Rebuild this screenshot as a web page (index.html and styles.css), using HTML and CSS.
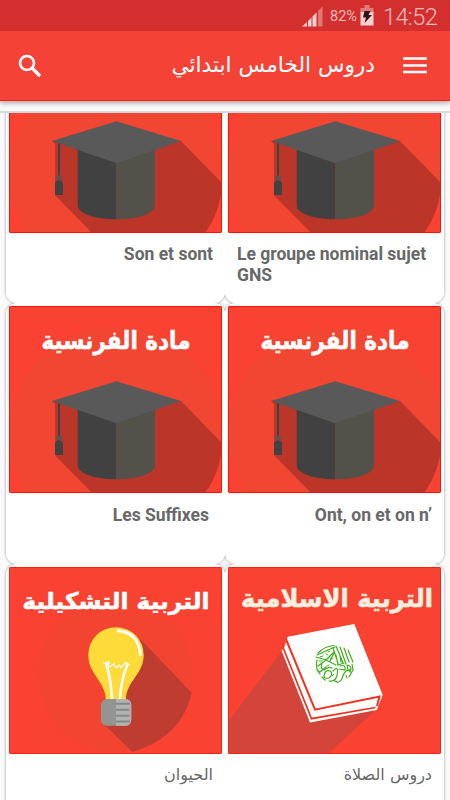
FILE: index.html
```html
<!DOCTYPE html>
<html lang="ar">
<head>
    <meta charset="UTF-8">
    <meta name="viewport" content="width=device-width, initial-scale=1.0">
    <title>دروس الخامس ابتدائي</title>
    <link rel="stylesheet" href="styles.css">
</head>
<body>

<!-- shared cap drawing -->
<svg class="defs" width="0" height="0">
    <symbol id="cap" viewBox="0 0 213 187">
        <rect width="213" height="187" fill="#f94232"/>
        <circle cx="107" cy="128" r="107" fill="#f14632"/>
        <path d="M43 95L172 95L212.7 136.7Q213 163 196 187H83.300L46 149.300V98Z" fill="#bb3529"/>
        <path d="M68.700 96H107.300V173.300C87 173.300 68.700 168 68.700 159Z" fill="#414141"/>
        <path d="M107.300 96H146V159C146 168 128 173.300 107.300 173.300Z" fill="#52514a"/>
        <path d="M43 95L107.300 75.300L172 95L107.300 117.300Z" fill="#595959"/>
        <path d="M50 97.500V130" stroke="#34484a" stroke-width="2"/>
        <circle cx="50" cy="132" r="2.800" fill="#555"/>
        <path d="M48 134.500H52L54 137V149H46V137Z" fill="#414343"/>
        <rect x=".5" y=".5" width="212" height="186" fill="none" stroke="#fb1208"/>
    </symbol>
</svg>

<header>
    <div class="statusbar">
        <svg width="21" height="21" viewBox="0 0 21 21">
            <path d="M0 20.500L5 16V20.500ZM6 15L9.500 11.500V20.500H6ZM10.500 10.500L14.500 6.500V20.500H10.500Z" fill="#f6d0d0"/>
            <path d="M16 5L20.500 .5V20.500H16Z" fill="#e07676"/>
        </svg>
        <span class="percent">82%</span>
        <svg class="battery" width="14" height="21" viewBox="0 0 14 21">
            <path d="M4.500 0H9.500V3H13.500V8H.5V3H4.500Z" fill="#e27c7c"/>
            <path d="M.5 7H13.500V20.500H.5Z" fill="#f6d0d0"/>
            <path d="M4.500 6H10.500L8.500 10H12L4.500 18L6 12.500H3Z" fill="#2c1414"/>
        </svg>
        <span class="clock">14:52</span>
    </div>
    <div class="toolbar">
        <svg class="search" width="24" height="24" viewBox="0 0 24 24">
            <circle cx="9" cy="9" r="7" fill="none" stroke="#fff" stroke-width="2.600"/>
            <path d="M14 14L22 22" stroke="#fff" stroke-width="3.300"/>
        </svg>
        <h1 dir="rtl">دروس الخامس ابتدائي</h1>
        <svg class="menu" width="24" height="17" viewBox="0 0 24 17">
            <path d="M0 1.500H24M0 8.500H24M0 15H24" stroke="#fff" stroke-width="2.700"/>
        </svg>
    </div>
</header>

<main>
    <div class="grid">
        <div class="card">
            <svg class="picture" viewBox="0 0 213 187"><use href="#cap"/></svg>
            <p class="right">Son et sont</p>
        </div>
        <div class="card">
            <svg class="picture" viewBox="0 0 213 187"><use href="#cap"/></svg>
            <p>Le groupe nominal sujet GNS</p>
        </div>

        <div class="card">
            <svg class="picture" viewBox="0 0 213 187">
                <use href="#cap"/>
                <text class="subject" x="107" y="42.500" textLength="149" lengthAdjust="spacingAndGlyphs">مادة الفرنسية</text>
            </svg>
            <p class="right pad">Les Suffixes</p>
        </div>
        <div class="card">
            <svg class="picture" viewBox="0 0 213 187">
                <use href="#cap"/>
                <text class="subject" x="107" y="42.500" textLength="149" lengthAdjust="spacingAndGlyphs">مادة الفرنسية</text>
            </svg>
            <p class="right">Ont, on et on n’</p>
        </div>

        <div class="card">
            <svg class="picture" viewBox="0 0 213 187">
                <rect width="213" height="187" fill="#f94232"/>
                <circle cx="106.500" cy="108" r="77" fill="#f34432"/>
                <path d="M131 72L135.300 76.300L182.700 125.700Q173 170 123.300 185L96 158L107 100Z" fill="#be3c30"/>
                <path d="M107 60.200A27.600 27.600 0 0 1 134.700 88C134.700 107 117 115 117 132H96.700C96.700 115 79.300 107 79.300 88A27.600 27.600 0 0 1 107 60.200Z" fill="#ffdb3a"/>
                <path d="M108 63.800Q130 65 131.500 88.500" fill="none" stroke="#fff" stroke-width="3"/>
                <path d="M97 96Q102 112 103 132M119 96Q112 112 111 132" fill="none" stroke="#fff" stroke-width="2.600"/>
                <path d="M94.500 96L100 95L99 101L105 97L107 101L110 98L112 101L116 96L121 98M116 95L119 98" fill="none" stroke="#fff" stroke-width="1.300"/>
                <rect x="92" y="132" width="30.300" height="26.700" rx="6" fill="#929591"/>
                <path d="M107 132H116Q122.300 132 122.300 138V152.700Q122.300 158.700 116 158.700H107Z" fill="#b0b3b2"/>
                <path d="M107 136.700H121M107 142.700H120.500M107 148.700H120.500M107 154.500H121" stroke="#858987" stroke-width="2"/>
                <rect class="edge" x=".5" y=".5" width="212" height="186"/>
                <text class="subject long" x="107" y="41.500" textLength="187" lengthAdjust="spacingAndGlyphs">التربية التشكيلية</text>
            </svg>
            <p class="right arabic" dir="rtl">الحيوان</p>
        </div>
        <div class="card">
            <svg class="picture" viewBox="0 0 213 187">
                <rect width="213" height="187" fill="#f94232"/>
                <path d="M54 84L0 154.700V187H100L147 143.500Z" fill="#d3443a"/>
                <path d="M59.700 69.700L126.300 57L154.700 128L148.700 143L82 155.500L53.500 83.500L56 81Z" fill="#fff"/>
                <path d="M54.500 79L83.500 151.700L147.500 140.500" fill="none" stroke="#f3311f" stroke-width="1.700"/>
                <path d="M57.500 71L87 142.700L151.500 129.500L149 139" fill="none" stroke="#f3311f" stroke-width="2"/>
                <path d="M54 79L58 73" stroke="#f94232" stroke-width="2"/>
                <!-- calligraphy roundel -->
                <g fill="none" stroke="#43ae1c" stroke-width="1.200" stroke-linecap="round">
                    <path d="M90 86Q97 79 106 78.500M89 88L100 83L107 80M88 90L98 93L108 98M89 93Q87 102 92 107M98 93L106 85M98 93L90 99M94 96Q92 102 96 103Q101 99 104 101"/>
                    <path d="M105 81L110 96M108 79L115 96M112 80L118 97M116 81L121 95M120 83L125 95M106 86L102 94M108 88L110 98L116 96M112 90L113 95"/>
                    <path d="M96 109Q97 102 102 104Q106 107 101 111Q96 112 96 109M105 104Q111 97 109 109Q107 115 101 114M112 99Q118 97 117 103L111 102M119 98Q125 99 122 105Q119 102 119 98M123 103Q116 102 114 112Q111 117 107 114M94 110L97 113M89 103L92 105L98 100M124 97L125 103L121 110"/>
                    <path d="M98 87L100 88M102 91L105 92M92 90L95 89M99 99L101 98M91 94L94 94M104 109L106 107M100 85L102 84M118 108L119 111" stroke-width="1"/>
                </g>
                <rect class="edge" x=".5" y=".5" width="212" height="186"/>
                <text class="subject cream" x="109" y="40" textLength="192" lengthAdjust="spacingAndGlyphs">التربية الاسلامية</text>
            </svg>
            <p class="right arabic" dir="rtl">دروس الصلاة</p>
        </div>
    </div>
</main>

</body>
</html>
```
FILE: styles.css
```css
body {
    margin: 0;
    height: 800px;
    display: flex;
    flex-direction: column;
    overflow: hidden;
    background-color: #fafafa;
    font-family: Roboto, "DejaVu Sans", sans-serif;
}
.defs {
    position: absolute;
}
header {
    flex: none;
    color: white;
    border-bottom: 1px solid #fb1c08;
    box-shadow: 0 2px 5px rgba(0, 0, 0, 0.35);
}
.statusbar {
    height: 31px;
    box-sizing: border-box;
    padding: 2px 13px 0 0;
    display: flex;
    align-items: center;
    justify-content: flex-end;
    background-color: #d32f2f;
    color: #f3bcbc;
}
.percent {
    width: 28px;
    margin: 0 2px 0 7px;
    font-size: 14.5px;
    white-space: nowrap;
}
.battery {
    margin: -2px 9px 0 0;
}
.clock {
    width: 54px;
    font-size: 23.5px;
    font-weight: 300;
    letter-spacing: -0.6px;
    white-space: nowrap;
}
.toolbar {
    height: 69px;
    box-sizing: border-box;
    padding: 0 23px 0 18px;
    display: flex;
    align-items: center;
    background-color: #f44336;
}
h1 {
    flex: 1;
    margin: 0 28px 2px 0;
    font-family: "DejaVu Sans", sans-serif;
    font-size: 21.7px;
    font-weight: normal;
}
main {
    flex: 1;
    margin-top: 10px;
    overflow: hidden;
    isolation: isolate;
    border-top: 2px solid #dadada;
}
.grid {
    display: grid;
    grid-template-columns: 219px 219px;
    grid-auto-rows: 260.500px;
    margin: -70.500px 0 0 6px;
}
.card {
    position: relative;
    box-sizing: border-box;
    padding: 3px 3px 0;
    border-radius: 11px;
    background-color: white;
}
/* shadow sits under the neighbouring cards */
.card::before {
    content: "";
    position: absolute;
    inset: 0;
    z-index: -1;
    border-radius: 11px;
    box-shadow: 0 0 3px rgba(0, 0, 0, 0.4);
}
.picture {
    display: block;
    width: 213px;
    height: 187px;
    border-radius: 2px;
}
.card p {
    margin: 11.500px 9px 0;
    color: #686868;
    font-size: 17.500px;
    font-weight: bold;
    line-height: 20.500px;
}
.card .right {
    text-align: right;
}
.card .pad {
    margin-right: 13px;
}
.card .arabic {
    font-family: "DejaVu Sans", sans-serif;
    font-size: 16px;
    font-weight: normal;
}
.card .arabic[dir="rtl"] {
    text-align: start;
}
.edge {
    fill: none;
    stroke: #fb2318;
}
.subject {
    fill: white;
    stroke: white;
    stroke-width: 0.6px;
    font-family: "DejaVu Sans", sans-serif;
    font-size: 25px;
    font-weight: bold;
    text-anchor: middle;
}
.long {
    font-size: 23px;
}
.cream {
    fill: #f6efdf;
    stroke: #f6efdf;
}
```
